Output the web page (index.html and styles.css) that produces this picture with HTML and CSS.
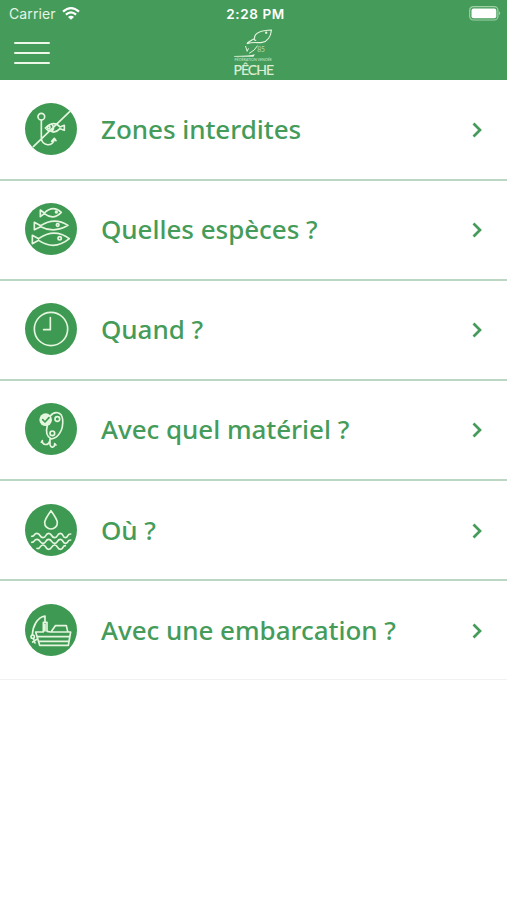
FILE: index.html
```html
<!DOCTYPE html>
<html lang="fr">
<head>
<meta charset="utf-8">
<title>Pêche</title>
<link rel="stylesheet" href="styles.css">
</head>
<body>
<header class="header">
  <div class="status">
    <div class="carrier">Carrier
      <svg class="wifi" viewBox="0 0 18 13"><path d="M1 4.700Q9-2.300 17 4.700M3.900 7.600Q9 3 14.100 7.600"/><path class="fill" d="M6 10Q9 7.300 12 10L9 12.800Z"/></svg>
    </div>
    <div class="time">2:28 PM</div>
    <div class="power"><svg class="battery" viewBox="0 0 33 15"><rect class="shell" x=".7" y=".7" width="28.2" height="13.3" rx="3.6"/><rect class="charge" x="2.5" y="2.5" width="24.8" height="9.7" rx="2"/><path class="charge tip" d="M30.200 5.300q2 2 0 4z"/></svg></div>
  </div>
  <div class="bar">
    <div class="menu"><span></span><span></span><span></span></div>
    <div class="brand">
      <svg class="fish" viewBox="60 84 116 102"><path class="body" d="M98 131C108 121 116 120 121 115C121 99 142 91 172 90C170 108 160 124 144 127C131 130 122 124 98 131M121 115C119 119 121 121 126 121"/><circle class="dot" cx="156" cy="98" r="3.5"/><path class="thin" d="M94 138l5 16 4-9M105 160Q122 152 130 137"/><path class="rule" d="M60 170H118L122 163Q108 168 60 168Z"/><text class="number" x="129" y="155">85</text><text class="tiny" x="61" y="182" textLength="112" lengthAdjust="spacingAndGlyphs">FÉDÉRATION VENDÉE</text></svg>
      <div class="name">PÊCHE</div>
    </div>
  </div>
</header>
<main class="list">
  <a class="row">
    <svg class="icon" viewBox="30 24 156 156"><circle class="disc" cx="108" cy="102" r="78"/><circle cx="79" cy="65" r="10"/><path d="M79 76V127C79 155 116 157 118 130L110 139M118 130L123 137M55 155L164 50M91 99Q116 74 135 96L148 91V106L135 101Q117 119 103 105M91 99L102 109M112 90Q119 99 112 108"/><circle cx="101" cy="97" r="4"/></svg>
    <span class="label">Zones interdites</span><svg class="chevron" viewBox="0 0 10 16"><path d="M1.500 1.500L8 8l-6.500 6.500"/></svg>
  </a>
  <a class="row">
    <svg class="icon" viewBox="30 24 156 156"><circle class="disc" cx="108" cy="102" r="78"/><path d="M88 54Q114 29 139 52Q115 77 88 56L76 65V45ZM77 92Q118 65 159 91Q118 116 77 95L58 104V82ZM71 131Q118 98 163 131Q118 168 71 136L52 146V121Z"/><circle class="dot" cx="124" cy="51" r="5"/><circle cx="128" cy="90" r="4"/><circle cx="134" cy="130" r="5"/></svg>
    <span class="label">Quelles espèces ?</span><svg class="chevron" viewBox="0 0 10 16"><path d="M1.500 1.500L8 8l-6.500 6.500"/></svg>
  </a>
  <a class="row">
    <svg class="icon" viewBox="30 24 156 156"><circle class="disc" cx="108" cy="102" r="78"/><circle cx="108" cy="102" r="50"/><path d="M106 68V104H86"/></svg>
    <span class="label">Quand ?</span><svg class="chevron" viewBox="0 0 10 16"><path d="M1.500 1.500L8 8l-6.500 6.500"/></svg>
  </a>
  <a class="row">
    <svg class="icon" viewBox="30 24 156 156"><circle class="disc" cx="108" cy="102" r="78"/><path d="M106 63C118 47 140 50 143 73C146 106 129 129 109 132C93 125 93 106 97 91M105 132V148M82 137C80 151 101 153 104 138M105 148C107 161 120 158 119 146M82 137L79 142M119 146L123 150"/><circle class="dot" cx="92" cy="74" r="19"/><path class="check" d="M83 74L90 81L102 68"/><circle cx="127" cy="72" r="7"/><circle cx="112" cy="115" r="7"/></svg>
    <span class="label">Avec quel matériel ?</span><svg class="chevron" viewBox="0 0 10 16"><path d="M1.500 1.500L8 8l-6.500 6.500"/></svg>
  </a>
  <a class="row">
    <svg class="icon" viewBox="30 24 156 156"><circle class="disc" cx="108" cy="102" r="78"/><path d="M108 44Q127 70 127 80A19 19 0 0 1 89 80Q89 70 108 44ZM50 121C61 121 55 112 66 112S73 125 84 125S90 112 101 112S108 125 119 125S125 112 136 112S141 125 151 125S155 114 167 114M50 139C61 139 55 130 66 130S73 142 84 142S90 130 101 130S108 142 119 142S125 130 136 130S141 142 151 142S155 132 167 132M66 157C76 162 73 147 84 147S90 160 101 160S108 147 119 147S125 160 136 160S141 149 151 149"/></svg>
    <span class="label">Où ?</span><svg class="chevron" viewBox="0 0 10 16"><path d="M1.500 1.500L8 8l-6.500 6.500"/></svg>
  </a>
  <a class="row">
    <svg class="icon" viewBox="30 24 156 156"><circle class="disc" cx="108" cy="102" r="78"/><path d="M62 108H85V79H96V106L106 108H167L160 148H74ZM66 122H164M70 136H162M110 105L121 89H154L158 106M90 79V60C66 64 53 91 52 117M90 85V105"/><circle cx="53" cy="122" r="5"/><path d="M55 128L60 141M65 130L53 138"/></svg>
    <span class="label">Avec une embarcation ?</span><svg class="chevron" viewBox="0 0 10 16"><path d="M1.500 1.500L8 8l-6.500 6.500"/></svg>
  </a>
</main>
</body>
</html>
```
FILE: styles.css
```css
* { box-sizing: border-box; }
body { margin: 0; background: #fff; font-family: "Noto Sans", sans-serif; }
.header { height: 79.500px; background: #459c5a; color: #fff; }
.status { display: grid; grid-template-columns: 1fr auto 1fr; height: 27px; padding: 0 7px 0 9px; align-items: center; font-family: Inter, sans-serif; font-size: 14px; }
.carrier { display: flex; align-items: center; gap: 6px; color: #e4f3e5; letter-spacing: .1px; }
.wifi { width: 18px; height: 13px; fill: none; stroke: #fff; stroke-width: 2.200; }
.wifi .fill { fill: #fff; stroke: none; }
.time { font-weight: 600; font-size: 13.500px; letter-spacing: .6px; padding-left: 2px; }
.power { display: flex; justify-content: flex-end; margin-right: -2px; }
.battery { width: 33px; height: 15px; }
.shell { fill: none; stroke: #a0cfa8; stroke-width: 1.200; }
.charge { fill: #fff; }
.tip { opacity: .6; }
.bar { display: grid; grid-template-columns: 1fr auto 1fr; padding: 0 14px; }
.menu { display: flex; flex-direction: column; gap: 8px; width: 36px; padding-top: 15px; }
.menu span { height: 2px; background: #edf8e9; border-radius: 1px; }
.brand { width: 40px; padding-top: 1px; color: #dcefd7; }
.fish { display: block; width: 39px; height: 34px; overflow: visible; fill: none; stroke: #e4f4df; stroke-width: 3.500; stroke-linejoin: round; }
.fish .dot, .fish .rule { fill: #e4f4df; stroke: none; }
.fish .thin { stroke-width: 3; }
.number { font: 20px Lato, sans-serif; fill: #b5dab3; stroke: none; }
.tiny { font: 9px Lato, sans-serif; fill: #d0e9cc; stroke: none; }
.name { font: 14px/16px Lato, sans-serif; letter-spacing: -.95px; white-space: nowrap; -webkit-text-stroke: .2px; }
.row { display: flex; align-items: center; height: 100.200px; padding: 0 25px 1px; border-bottom: 2px solid #bcd6c4; color: #459c5a; }
.row:first-child { height: 101px; }
.row:last-child { height: 99px; border-bottom: 1px solid #f1f1f1; }
.icon { flex: none; width: 52px; height: 52px; fill: none; stroke: #e5f6df; stroke-width: 5; stroke-linecap: round; stroke-linejoin: round; }
.icon .disc { fill: #3e9952; stroke: none; }
.icon .dot { fill: #e5f6df; stroke: none; }
.icon .check { stroke: #3e9952; }
.label { flex: 1; margin-left: 24px; font-size: 26px; font-weight: 500; letter-spacing: -.04px; white-space: nowrap; }
.chevron { flex: none; width: 10px; height: 16px; fill: none; stroke: #459c5a; stroke-width: 2.700; position: relative; top: 1px; }
```
